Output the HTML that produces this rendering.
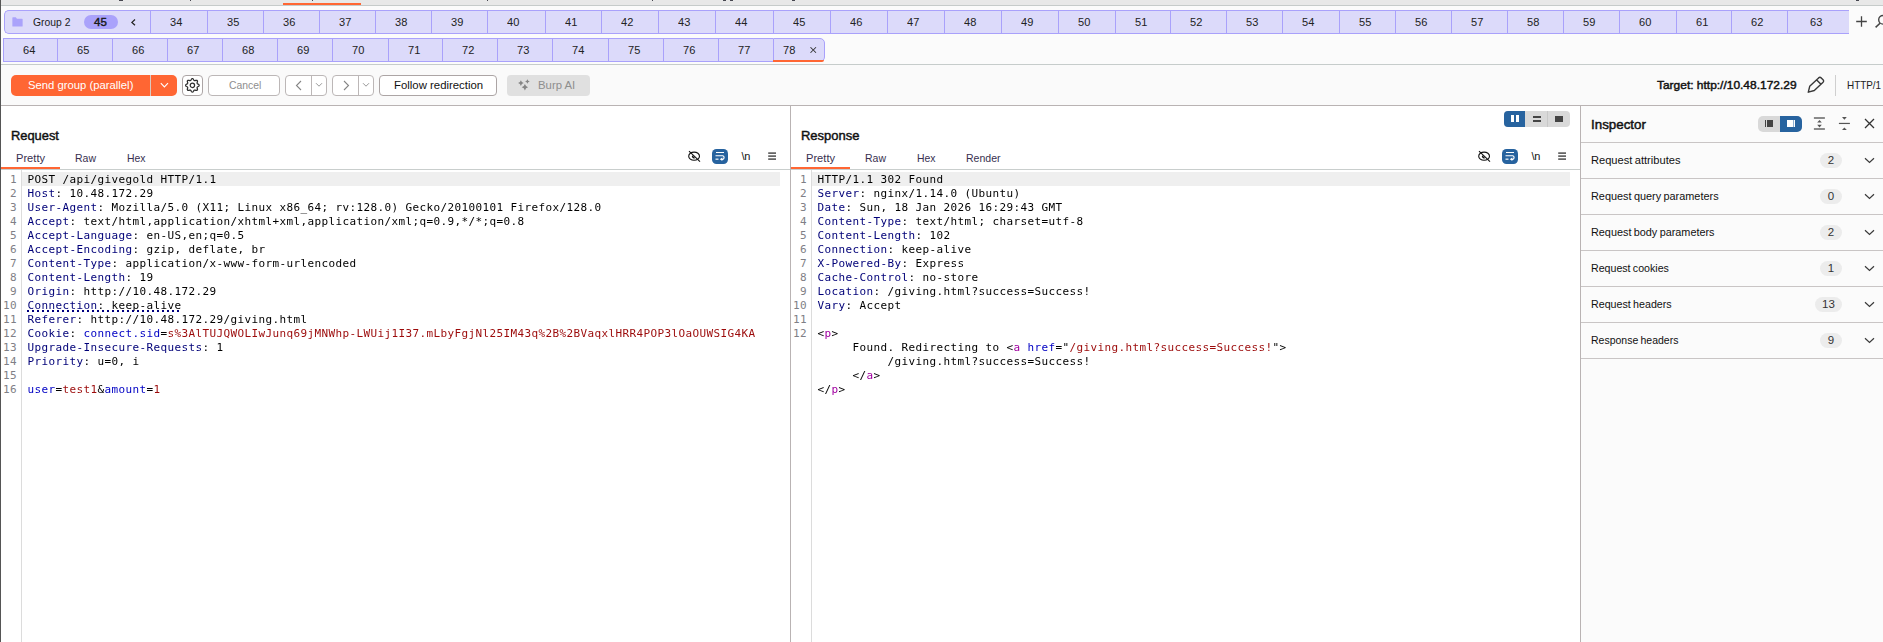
<!DOCTYPE html>
<html><head><meta charset="utf-8"><title>Burp Repeater</title>
<style>
html,body{margin:0;padding:0}
body{width:1883px;height:642px;position:relative;overflow:hidden;background:#fff;font-family:"Liberation Sans","DejaVu Sans",sans-serif;font-size:11.5px;color:#1a1a1a}
.a{position:absolute}
.t{position:absolute;white-space:nowrap;line-height:14px;height:14px}
.tab{position:absolute;box-sizing:border-box;background:#dcdafa;border:1px solid #a9a1fb;border-right:none;height:24px;text-align:left;line-height:22px;font-size:11.5px;color:#222;padding-left:19px}
.btn{position:absolute;box-sizing:border-box;border:1px solid #aca5a5;border-radius:4px;background:#fff;height:21px;top:75px}
.mono{font-family:"DejaVu Sans Mono","Liberation Mono",monospace;font-size:11px;letter-spacing:0.378px;white-space:pre;line-height:14px}
.ln{position:absolute;height:14px;white-space:pre;will-change:transform}
.num{position:absolute;height:14px;text-align:right;color:#7f7f86;width:18px}
.sb{font-weight:normal;-webkit-text-stroke:0.45px currentColor}
.h{color:#000078}
.r{color:#9c0a0a}
.b{color:#0000c4}
.m{color:#a000a0}
.k{color:#000}
.ui{color:#383050}
.row{position:absolute;left:1581px;width:302px;height:36px;border-bottom:1px solid #c9c5c5;box-sizing:border-box}
.badge{position:absolute;height:15px;border-radius:8px;background:#ececec;text-align:center;line-height:15px;font-size:11.5px;color:#333}
.tn{display:inline-block;transform-origin:0 50%;transform:scaleX(0.9615)}
</style></head>
<body>
<div class="a" style="left:0;top:0;width:1883px;height:5px;background:#e8e8e8"></div>
<div class="a" style="left:0;top:5px;width:1883px;height:1px;background:#c6cbca"></div>
<div class="a" style="left:283px;top:3px;width:78px;height:2px;background:#ff6633"></div>
<div class="a" style="left:119px;top:0;width:4px;height:1px;background:#2a2a35;opacity:.85"></div>
<div class="a" style="left:189.5px;top:0;width:1.2px;height:1px;background:#2a2a35;opacity:.85"></div>
<div class="a" style="left:312px;top:0;width:1.2px;height:1px;background:#2a2a35;opacity:.85"></div>
<div class="a" style="left:486.5px;top:0;width:1.2px;height:1px;background:#2a2a35;opacity:.85"></div>
<div class="a" style="left:652px;top:0;width:1.2px;height:1px;background:#2a2a35;opacity:.85"></div>
<div class="a" style="left:723px;top:0;width:3px;height:1px;background:#2a2a35;opacity:.85"></div>
<div class="a" style="left:729.5px;top:0;width:3px;height:1px;background:#2a2a35;opacity:.85"></div>
<div class="a" style="left:791.5px;top:0;width:3px;height:1px;background:#2a2a35;opacity:.85"></div>
<div class="a" style="left:1856px;top:0;width:3px;height:1px;background:#2a2a35;opacity:.85"></div>
<div class="a" style="left:0;top:6px;width:1883px;height:58px;background:#fbfbfb"></div>
<div class="a" style="left:0;top:64px;width:1883px;height:1px;background:#c6cccb"></div>
<div class="a" style="left:0;top:65px;width:1883px;height:40px;background:#fafafa"></div>
<div class="a" style="left:0;top:105px;width:1883px;height:1px;background:#b9b3b3"></div>
<div class="tab" style="left:4px;top:10px;width:146px;border-radius:5px 0 0 5px"></div>
<div class="tab" style="left:150px;top:10px;width:57px"><span class="tn">34</span></div>
<div class="tab" style="left:207px;top:10px;width:56px"><span class="tn">35</span></div>
<div class="tab" style="left:263px;top:10px;width:56px"><span class="tn">36</span></div>
<div class="tab" style="left:319px;top:10px;width:56px"><span class="tn">37</span></div>
<div class="tab" style="left:375px;top:10px;width:56px"><span class="tn">38</span></div>
<div class="tab" style="left:431px;top:10px;width:56px"><span class="tn">39</span></div>
<div class="tab" style="left:487px;top:10px;width:58px"><span class="tn">40</span></div>
<div class="tab" style="left:545px;top:10px;width:56px"><span class="tn">41</span></div>
<div class="tab" style="left:601px;top:10px;width:57px"><span class="tn">42</span></div>
<div class="tab" style="left:658px;top:10px;width:57px"><span class="tn">43</span></div>
<div class="tab" style="left:715px;top:10px;width:58px"><span class="tn">44</span></div>
<div class="tab" style="left:773px;top:10px;width:57px"><span class="tn">45</span></div>
<div class="tab" style="left:830px;top:10px;width:57px"><span class="tn">46</span></div>
<div class="tab" style="left:887px;top:10px;width:57px"><span class="tn">47</span></div>
<div class="tab" style="left:944px;top:10px;width:57px"><span class="tn">48</span></div>
<div class="tab" style="left:1001px;top:10px;width:57px"><span class="tn">49</span></div>
<div class="tab" style="left:1058px;top:10px;width:57px"><span class="tn">50</span></div>
<div class="tab" style="left:1115px;top:10px;width:55px"><span class="tn">51</span></div>
<div class="tab" style="left:1170px;top:10px;width:56px"><span class="tn">52</span></div>
<div class="tab" style="left:1226px;top:10px;width:56px"><span class="tn">53</span></div>
<div class="tab" style="left:1282px;top:10px;width:57px"><span class="tn">54</span></div>
<div class="tab" style="left:1339px;top:10px;width:56px"><span class="tn">55</span></div>
<div class="tab" style="left:1395px;top:10px;width:56px"><span class="tn">56</span></div>
<div class="tab" style="left:1451px;top:10px;width:56px"><span class="tn">57</span></div>
<div class="tab" style="left:1507px;top:10px;width:56px"><span class="tn">58</span></div>
<div class="tab" style="left:1563px;top:10px;width:56px"><span class="tn">59</span></div>
<div class="tab" style="left:1619px;top:10px;width:57px"><span class="tn">60</span></div>
<div class="tab" style="left:1676px;top:10px;width:55px"><span class="tn">61</span></div>
<div class="tab" style="left:1731px;top:10px;width:56px"><span class="tn">62</span></div>
<div class="tab" style="left:1787px;top:10px;width:62px;padding-left:22px"><span class="tn">63</span></div>
<div class="tab" style="left:3px;top:38px;width:54px"><span class="tn">64</span></div>
<div class="tab" style="left:57px;top:38px;width:55px"><span class="tn">65</span></div>
<div class="tab" style="left:112px;top:38px;width:55px"><span class="tn">66</span></div>
<div class="tab" style="left:167px;top:38px;width:55px"><span class="tn">67</span></div>
<div class="tab" style="left:222px;top:38px;width:55px"><span class="tn">68</span></div>
<div class="tab" style="left:277px;top:38px;width:55px"><span class="tn">69</span></div>
<div class="tab" style="left:332px;top:38px;width:56px"><span class="tn">70</span></div>
<div class="tab" style="left:388px;top:38px;width:54px"><span class="tn">71</span></div>
<div class="tab" style="left:442px;top:38px;width:55px"><span class="tn">72</span></div>
<div class="tab" style="left:497px;top:38px;width:55px"><span class="tn">73</span></div>
<div class="tab" style="left:552px;top:38px;width:56px"><span class="tn">74</span></div>
<div class="tab" style="left:608px;top:38px;width:55px"><span class="tn">75</span></div>
<div class="tab" style="left:663px;top:38px;width:55px"><span class="tn">76</span></div>
<div class="tab" style="left:718px;top:38px;width:55px"><span class="tn">77</span></div>
<div class="tab" style="left:773px;top:38px;width:52px;border-right:1px solid #a9a1fb;border-radius:0 5px 5px 0"></div>
<div class="a" style="left:773px;top:60px;width:51px;height:2px;background:#ff6633;border-radius:0 0 5px 0"></div>
<div class="t" id="t78" style="transform-origin:0 50%;transform:scaleX(0.9615);left:783.0px;top:43px">78</div>
<svg class="a" style="left:809px;top:46px" width="9" height="9" viewBox="0 0 9 9"><path d="M1.500 1.250L7 6.750M7 1.250L1.500 6.750" stroke="#333" stroke-width="1.050" fill="none"/></svg>
<svg class="a" style="left:12px;top:17px" width="11" height="10" viewBox="0 0 12 11" preserveAspectRatio="none"><path d="M0.5 0.3h3.6l1.3 1.5h5.6c.4 0 .6.2.6.6v7.4c0 .4-.2.6-.6.6h-10c-.4 0-.6-.2-.6-.6v-8.9c0-.4.2-.6.6-.6z" fill="#aaa2fb"/></svg>
<div class="t" id="tgroup" style="transform-origin:0 50%;transform:scaleX(0.9);left:33.0px;top:15px">Group 2</div>
<div class="a" style="left:84px;top:15px;width:34px;height:14px;border-radius:7px;background:#aaa2fb"></div>
<div class="t sb" id="t45" style="transform-origin:0 50%;transform:scaleX(1.0);left:94.0px;top:15px">45</div>
<svg class="a" style="left:130px;top:18px" width="7" height="9" viewBox="0 0 7 9"><path d="M5 1.500L1.900 4.400L5 7.300" stroke="#222" stroke-width="1.250" fill="none"/></svg>
<svg class="a" style="left:1855px;top:15px" width="13" height="13" viewBox="0 0 13 13"><path d="M6.500 1.200v10.600M1.200 6.500h10.600" stroke="#444" stroke-width="1.300" fill="none"/></svg>
<svg class="a" style="left:1871px;top:12px" width="12" height="18" viewBox="0 0 12 18"><circle cx="12" cy="7.800" r="4.300" stroke="#444" stroke-width="1.400" fill="none"/><path d="M9 11.200L4.600 15.400" stroke="#444" stroke-width="1.500"/></svg>
<div class="a" style="left:11px;top:75px;width:166px;height:21px;border-radius:5px;background:#ff6633"></div>
<div class="a" style="left:150px;top:75px;width:1px;height:21px;background:#d9c8c0"></div>
<div class="t" id="tsend" style="transform-origin:0 50%;transform:scaleX(0.9813);left:28.0px;top:78px;color:#fff">Send group (parallel)</div>
<svg class="a" style="left:160px;top:82px" width="9" height="7" viewBox="0 0 9 7"><path d="M0.8 1.2L4.4 4.9L8 1.2" stroke="#fff" stroke-width="1.1" fill="none"/></svg>
<div class="btn" style="left:182px;width:21px"></div>
<div class="btn" style="left:208px;width:72px;border-color:#bcb7b7"></div>
<div class="t" id="tcancel" style="transform-origin:0 50%;transform:scaleX(0.9028);left:228.95px;top:78px;color:#8e8e8e">Cancel</div>
<div class="btn" style="left:285px;width:42px;border-color:#bcb7b7"></div><div class="a" style="left:311px;top:76px;width:1px;height:19px;background:#bcb7b7"></div>
<div class="btn" style="left:332px;width:42px;border-color:#bcb7b7"></div><div class="a" style="left:358px;top:76px;width:1px;height:19px;background:#bcb7b7"></div>
<svg class="a" style="left:295px;top:80px" width="8" height="11" viewBox="0 0 8 11"><path d="M6 1L1.5 5.5L6 10" stroke="#858585" stroke-width="1.1" fill="none"/></svg>
<svg class="a" style="left:342px;top:80px" width="8" height="11" viewBox="0 0 8 11"><path d="M2 1L6.5 5.5L2 10" stroke="#858585" stroke-width="1.1" fill="none"/></svg>
<svg class="a" style="left:315px;top:82px" width="8" height="6" viewBox="0 0 8 6"><path d="M1 1.2L4 4.2L7 1.2" stroke="#999" stroke-width="1" fill="none"/></svg>
<svg class="a" style="left:362px;top:82px" width="8" height="6" viewBox="0 0 8 6"><path d="M1 1.2L4 4.2L7 1.2" stroke="#999" stroke-width="1" fill="none"/></svg>
<div class="btn" style="left:379px;width:118px"></div>
<div class="t" id="tfollow" style="transform-origin:0 50%;transform:scaleX(0.9888);left:394.01px;top:78px;color:#111">Follow redirection</div>
<div class="a" style="left:507px;top:75px;width:83px;height:21px;border-radius:4px;background:#e0e0e0"></div>
<div class="t" id="tburp" style="transform-origin:0 50%;transform:scaleX(0.9865);left:538.01px;top:78px;color:#8e8e8e">Burp AI</div>
<svg class="a" style="left:515px;top:76px" width="16" height="16" viewBox="0 0 16 16"><path d="M5.90 4.30L6.89 6.11L8.70 7.10L6.89 8.09L5.90 9.90L4.91 8.09L3.10 7.10L4.91 6.11ZM12.40 3.20L13.21 4.69L14.70 5.50L13.21 6.31L12.40 7.80L11.59 6.31L10.10 5.50L11.59 4.69ZM9.90 8.00L11.03 10.07L13.10 11.20L11.03 12.33L9.90 14.40L8.77 12.33L6.70 11.20L8.77 10.07Z" fill="#858585"/></svg>
<svg class="a" style="left:182px;top:75px" width="21" height="21" viewBox="0 0 21 21"><path d="M17.15 10.35L17.06 10.79L16.79 11.19L16.24 11.51L15.67 11.76L15.35 12.03L15.16 12.32L15.09 12.66L15.13 13.08L15.35 13.66L15.51 14.27L15.42 14.75L15.17 15.12L14.80 15.37L14.32 15.46L13.71 15.30L13.13 15.08L12.71 15.04L12.37 15.11L12.08 15.30L11.81 15.62L11.56 16.19L11.24 16.74L10.84 17.01L10.40 17.10L9.96 17.01L9.56 16.74L9.24 16.19L8.99 15.62L8.72 15.30L8.43 15.11L8.09 15.04L7.67 15.08L7.09 15.30L6.48 15.46L6.00 15.37L5.63 15.12L5.38 14.75L5.29 14.27L5.45 13.66L5.67 13.08L5.71 12.66L5.64 12.32L5.45 12.03L5.13 11.76L4.56 11.51L4.01 11.19L3.74 10.79L3.65 10.35L3.74 9.91L4.01 9.51L4.56 9.19L5.13 8.94L5.45 8.67L5.64 8.38L5.71 8.04L5.67 7.62L5.45 7.04L5.29 6.43L5.38 5.95L5.63 5.58L6.00 5.33L6.48 5.24L7.09 5.40L7.67 5.62L8.09 5.66L8.43 5.59L8.72 5.40L8.99 5.08L9.24 4.51L9.56 3.96L9.96 3.69L10.40 3.60L10.84 3.69L11.24 3.96L11.56 4.51L11.81 5.08L12.08 5.40L12.37 5.59L12.71 5.66L13.13 5.62L13.71 5.40L14.32 5.24L14.80 5.33L15.17 5.58L15.42 5.95L15.51 6.43L15.35 7.04L15.13 7.62L15.09 8.04L15.16 8.38L15.35 8.67L15.67 8.94L16.24 9.19L16.79 9.51L17.06 9.91Z" fill="none" stroke="#2e2e2e" stroke-width="1.25" stroke-linejoin="round"/><circle cx="10.4" cy="10.35" r="2.2" fill="none" stroke="#2e2e2e" stroke-width="1.2"/></svg>
<div id="ttarget" class="t sb" style="transform-origin:0 50%;transform:scaleX(1.0393);left:1657.2px;top:78px;color:#111">Target: http://10.48.172.29</div>
<svg class="a" style="left:1800px;top:70px" width="30" height="30" viewBox="0 0 30 30"><path d="M8.300 22.200L9.700 16.300L18.600 7.900Q19.900 6.800 21.200 7.900L23.100 9.800Q24.300 11.100 23.100 12.300L14.300 20.500Z M16.700 9.900L20.700 13.900" stroke="#383838" stroke-width="1.400" fill="none" stroke-linejoin="round"/></svg>
<div class="a" style="left:1835px;top:75px;width:1px;height:21px;background:#cfcfcf"></div>
<div class="t" id="thttp" style="transform-origin:0 50%;transform:scaleX(0.86);left:1846.6px;top:78px;color:#222">HTTP/1</div>
<div class="a" style="left:790px;top:105px;width:1px;height:537px;background:#b9b3b3"></div>
<div class="a" style="left:1580px;top:105px;width:1px;height:537px;background:#b9b3b3"></div>
<div class="a" style="left:1581px;top:106px;width:302px;height:536px;background:#fbfbfb"></div>
<div class="t sb" id="rqtitle" style="transform-origin:0 50%;transform:scaleX(0.9898);left:11.01px;top:129px;font-size:13px;color:#111">Request</div>
<div class="t ui" id="rqtab0" style="transform-origin:0 50%;transform:scaleX(0.9667);left:16.0px;top:151px">Pretty</div>
<div class="t ui" id="rqtab1" style="transform-origin:0 50%;transform:scaleX(0.913);left:75.04px;top:151px">Raw</div>
<div class="t ui" id="rqtab2" style="transform-origin:0 50%;transform:scaleX(0.9048);left:127.0px;top:151px">Hex</div>
<div class="a" style="left:1px;top:169px;width:789px;height:1px;background:#c9cecd"></div>
<div class="a" style="left:1px;top:167px;width:59px;height:2px;background:#ff6633"></div>
<div class="a" style="left:21px;top:170px;width:1px;height:472px;background:#dcdcdc"></div>
<div class="a" style="left:22px;top:172px;width:758px;height:14px;background:#efefef"></div>
<div class="t sb" id="rstitle" style="transform-origin:0 50%;transform:scaleX(0.9983);left:801.0px;top:129px;font-size:13px;color:#111">Response</div>
<div class="t ui" id="rstab0" style="transform-origin:0 50%;transform:scaleX(0.9667);left:806.0px;top:151px">Pretty</div>
<div class="t ui" id="rstab1" style="transform-origin:0 50%;transform:scaleX(0.913);left:865.04px;top:151px">Raw</div>
<div class="t ui" id="rstab2" style="transform-origin:0 50%;transform:scaleX(0.9048);left:917.0px;top:151px">Hex</div>
<div class="t ui" id="rstab3" style="transform-origin:0 50%;transform:scaleX(0.9158);left:966.2px;top:151px">Render</div>
<div class="a" style="left:791px;top:169px;width:789px;height:1px;background:#c9cecd"></div>
<div class="a" style="left:791px;top:167px;width:59px;height:2px;background:#ff6633"></div>
<div class="a" style="left:811px;top:170px;width:1px;height:472px;background:#dcdcdc"></div>
<div class="a" style="left:812px;top:172px;width:758px;height:14px;background:#efefef"></div>
<div class="num mono" style="left:-1px;top:173px">1</div>
<div class="ln mono" style="left:27px;padding-left:0.5px;top:173px"><span class="k">POST /api/givegold HTTP/1.1</span></div>
<div class="num mono" style="left:-1px;top:187px">2</div>
<div class="ln mono" style="left:27px;padding-left:0.5px;top:187px"><span class="h">Host</span><span class="k">: 10.48.172.29</span></div>
<div class="num mono" style="left:-1px;top:201px">3</div>
<div class="ln mono" style="left:27px;padding-left:0.5px;top:201px"><span class="h">User-Agent</span><span class="k">: Mozilla/5.0 (X11; Linux x86_64; rv:128.0) Gecko/20100101 Firefox/128.0</span></div>
<div class="num mono" style="left:-1px;top:215px">4</div>
<div class="ln mono" style="left:27px;padding-left:0.5px;top:215px"><span class="h">Accept</span><span class="k">: text/html,application/xhtml+xml,application/xml;q=0.9,*/*;q=0.8</span></div>
<div class="num mono" style="left:-1px;top:229px">5</div>
<div class="ln mono" style="left:27px;padding-left:0.5px;top:229px"><span class="h">Accept-Language</span><span class="k">: en-US,en;q=0.5</span></div>
<div class="num mono" style="left:-1px;top:243px">6</div>
<div class="ln mono" style="left:27px;padding-left:0.5px;top:243px"><span class="h">Accept-Encoding</span><span class="k">: gzip, deflate, br</span></div>
<div class="num mono" style="left:-1px;top:257px">7</div>
<div class="ln mono" style="left:27px;padding-left:0.5px;top:257px"><span class="h">Content-Type</span><span class="k">: application/x-www-form-urlencoded</span></div>
<div class="num mono" style="left:-1px;top:271px">8</div>
<div class="ln mono" style="left:27px;padding-left:0.5px;top:271px"><span class="h">Content-Length</span><span class="k">: 19</span></div>
<div class="num mono" style="left:-1px;top:285px">9</div>
<div class="ln mono" style="left:27px;padding-left:0.5px;top:285px"><span class="h">Origin</span><span class="k">: http://10.48.172.29</span></div>
<div class="num mono" style="left:-1px;top:299px">10</div>
<div class="ln mono" style="left:27px;padding-left:0.5px;top:299px"><span class="h">Connection</span><span class="k">: keep-alive</span></div>
<div class="num mono" style="left:-1px;top:313px">11</div>
<div class="ln mono" style="left:27px;padding-left:0.5px;top:313px"><span class="h">Referer</span><span class="k">: http://10.48.172.29/giving.html</span></div>
<div class="num mono" style="left:-1px;top:327px">12</div>
<div class="ln mono" style="left:27px;padding-left:0.5px;top:327px"><span class="h">Cookie</span><span class="k">: </span><span class="b">connect.sid</span><span class="k">=</span><span class="r">s%3AlTUJQWOLIwJunq69jMNWhp-LWUij1I37.mLbyFgjNl25IM43q%2B%2BVaqxlHRR4POP3lOaOUWSIG4KA</span></div>
<div class="num mono" style="left:-1px;top:341px">13</div>
<div class="ln mono" style="left:27px;padding-left:0.5px;top:341px"><span class="h">Upgrade-Insecure-Requests</span><span class="k">: 1</span></div>
<div class="num mono" style="left:-1px;top:355px">14</div>
<div class="ln mono" style="left:27px;padding-left:0.5px;top:355px"><span class="h">Priority</span><span class="k">: u=0, i</span></div>
<div class="num mono" style="left:-1px;top:369px">15</div>
<div class="num mono" style="left:-1px;top:383px">16</div>
<div class="ln mono" style="left:27px;padding-left:0.5px;top:383px"><span class="b">user</span><span class="k">=</span><span class="r">test1</span><span class="k">&amp;</span><span class="b">amount</span><span class="k">=</span><span class="r">1</span></div>
<div class="num mono" style="left:789px;top:173px">1</div>
<div class="ln mono" style="left:817px;padding-left:0.5px;top:173px"><span class="k">HTTP/1.1 302 Found</span></div>
<div class="num mono" style="left:789px;top:187px">2</div>
<div class="ln mono" style="left:817px;padding-left:0.5px;top:187px"><span class="h">Server</span><span class="k">: nginx/1.14.0 (Ubuntu)</span></div>
<div class="num mono" style="left:789px;top:201px">3</div>
<div class="ln mono" style="left:817px;padding-left:0.5px;top:201px"><span class="h">Date</span><span class="k">: Sun, 18 Jan 2026 16:29:43 GMT</span></div>
<div class="num mono" style="left:789px;top:215px">4</div>
<div class="ln mono" style="left:817px;padding-left:0.5px;top:215px"><span class="h">Content-Type</span><span class="k">: text/html; charset=utf-8</span></div>
<div class="num mono" style="left:789px;top:229px">5</div>
<div class="ln mono" style="left:817px;padding-left:0.5px;top:229px"><span class="h">Content-Length</span><span class="k">: 102</span></div>
<div class="num mono" style="left:789px;top:243px">6</div>
<div class="ln mono" style="left:817px;padding-left:0.5px;top:243px"><span class="h">Connection</span><span class="k">: keep-alive</span></div>
<div class="num mono" style="left:789px;top:257px">7</div>
<div class="ln mono" style="left:817px;padding-left:0.5px;top:257px"><span class="h">X-Powered-By</span><span class="k">: Express</span></div>
<div class="num mono" style="left:789px;top:271px">8</div>
<div class="ln mono" style="left:817px;padding-left:0.5px;top:271px"><span class="h">Cache-Control</span><span class="k">: no-store</span></div>
<div class="num mono" style="left:789px;top:285px">9</div>
<div class="ln mono" style="left:817px;padding-left:0.5px;top:285px"><span class="h">Location</span><span class="k">: /giving.html?success=Success!</span></div>
<div class="num mono" style="left:789px;top:299px">10</div>
<div class="ln mono" style="left:817px;padding-left:0.5px;top:299px"><span class="h">Vary</span><span class="k">: Accept</span></div>
<div class="num mono" style="left:789px;top:313px">11</div>
<div class="num mono" style="left:789px;top:327px">12</div>
<div class="ln mono" style="left:817px;padding-left:0.5px;top:327px"><span class="k">&lt;</span><span class="m">p</span><span class="k">&gt;</span></div>
<div class="ln mono" style="left:817px;padding-left:0.5px;top:341px"><span class="k">     Found. Redirecting to &lt;</span><span class="m">a</span><span class="k"> </span><span class="b">href</span><span class="k">="</span><span class="r">/giving.html?success=Success!</span><span class="k">"&gt;</span></div>
<div class="ln mono" style="left:817px;padding-left:0.5px;top:355px"><span class="k">          /giving.html?success=Success!</span></div>
<div class="ln mono" style="left:817px;padding-left:0.5px;top:369px"><span class="k">     &lt;/</span><span class="m">a</span><span class="k">&gt;</span></div>
<div class="ln mono" style="left:817px;padding-left:0.5px;top:383px"><span class="k">&lt;/</span><span class="m">p</span><span class="k">&gt;</span></div>
<div class="a" style="left:27px;top:310px;width:154px;height:2px;background:repeating-linear-gradient(90deg,#000080 0,#000080 2px,transparent 2px,transparent 5px)"></div>
<svg class="a" style="left:687px;top:150px" width="15" height="13" viewBox="0 0 15 13"><ellipse cx="7.1" cy="6.2" rx="5.4" ry="4.1" fill="none" stroke="#111" stroke-width="1.1"/><path d="M5.2 5.2a2 2 0 0 0 2.9 2.700z" fill="#111"/><path d="M2 1.200L13 11.6" stroke="#111" stroke-width="1.1"/></svg>
<div class="a" style="left:712px;top:149px;width:16px;height:15px;border-radius:4.500px;background:#27639f"></div>
<svg class="a" style="left:712px;top:149px" width="16" height="15" viewBox="0 0 16 15"><path d="M4 3.500h8" stroke="#fff" stroke-width="1" fill="none"/><path d="M3.5 6.800h7.300a1.9 1.9 0 0 1 0 3.600H9.5" stroke="#fff" stroke-width="1.1" fill="none"/><path d="M3.5 10.200h3" stroke="#fff" stroke-width="1.4" fill="none" opacity="0.850"/><path d="M10.3 8.400L7.8 10.300l2.5 1.800z" fill="#fff"/></svg>
<div class="t" style="left:741.6px;top:149px;font-size:11px;color:#111;letter-spacing:-0.300px">\n</div>
<svg class="a" style="left:768px;top:152px" width="8" height="9" viewBox="0 0 8 9"><path d="M0.2 1.100h7.800M0.2 4.100h7.800M0.2 7.150h7.8" stroke="#666" stroke-width="1.7"/></svg>
<svg class="a" style="left:1477px;top:150px" width="15" height="13" viewBox="0 0 15 13"><ellipse cx="7.1" cy="6.2" rx="5.4" ry="4.1" fill="none" stroke="#111" stroke-width="1.1"/><path d="M5.2 5.2a2 2 0 0 0 2.9 2.700z" fill="#111"/><path d="M2 1.200L13 11.6" stroke="#111" stroke-width="1.1"/></svg>
<div class="a" style="left:1502px;top:149px;width:16px;height:15px;border-radius:4.500px;background:#27639f"></div>
<svg class="a" style="left:1502px;top:149px" width="16" height="15" viewBox="0 0 16 15"><path d="M4 3.500h8" stroke="#fff" stroke-width="1" fill="none"/><path d="M3.5 6.800h7.300a1.9 1.9 0 0 1 0 3.600H9.5" stroke="#fff" stroke-width="1.1" fill="none"/><path d="M3.5 10.200h3" stroke="#fff" stroke-width="1.4" fill="none" opacity="0.850"/><path d="M10.3 8.400L7.8 10.300l2.5 1.800z" fill="#fff"/></svg>
<div class="t" style="left:1531.6px;top:149px;font-size:11px;color:#111;letter-spacing:-0.300px">\n</div>
<svg class="a" style="left:1558px;top:152px" width="8" height="9" viewBox="0 0 8 9"><path d="M0.2 1.100h7.800M0.2 4.100h7.800M0.2 7.150h7.8" stroke="#666" stroke-width="1.7"/></svg>
<div class="a" style="left:1504px;top:111px;width:66px;height:16px;border-radius:4px;background:#d9d9d9"></div>
<div class="a" style="left:1504px;top:111px;width:21px;height:16px;border-radius:4px 0 0 4px;background:#27639f"></div>
<div class="a" style="left:1547px;top:111px;width:1px;height:16px;background:#c8c8c8"></div>
<div class="a" style="left:1511px;top:115px;width:3px;height:7px;background:#fff"></div><div class="a" style="left:1516px;top:115px;width:3px;height:7px;background:#fff"></div>
<div class="a" style="left:1533px;top:116px;width:8px;height:2px;background:#444"></div><div class="a" style="left:1533px;top:120px;width:8px;height:2px;background:#444"></div>
<div class="a" style="left:1555px;top:116px;width:8px;height:6px;background:#444"></div>
<div class="t sb" id="tinsp" style="transform-origin:0 50%;transform:scaleX(1.0278);left:1590.99px;top:118px;font-size:13px;color:#111">Inspector</div>
<div class="a" style="left:1758px;top:116px;width:44px;height:16px;border-radius:5px;background:#d9d9d9"></div>
<div class="a" style="left:1780px;top:116px;width:22px;height:16px;border-radius:0 5px 5px 0;background:#27639f"></div>
<div class="a" style="left:1765px;top:120.3px;width:8px;height:6.5px;background:#444"></div><div class="a" style="left:1766.2px;top:120.3px;width:0.6px;height:6.5px;background:#d9d9d9"></div>
<div class="a" style="left:1787px;top:120.3px;width:8px;height:6.5px;background:#fff"></div><div class="a" style="left:1792.5px;top:120.3px;width:1px;height:6.5px;background:#8fb0d2"></div>
<svg class="a" style="left:1813px;top:116px" width="13" height="15" viewBox="0 0 13 15"><path d="M0.900 2h11M0.900 13h11" stroke="#666" stroke-width="1.600"/><path d="M6.500 3.900l2.300 2.700h-4.600zM6.500 11.400l2.300-2.700h-4.600z" fill="#555"/></svg>
<svg class="a" style="left:1838px;top:116px" width="13" height="15" viewBox="0 0 13 15"><path d="M0.900 7.450h11" stroke="#555" stroke-width="1.200"/><path d="M6.400 3.700l2.400-2.600h-4.800zM6.400 11.400l2.400 2.700h-4.800z" fill="#555"/></svg>
<svg class="a" style="left:1864px;top:118px" width="11" height="11" viewBox="0 0 11 11"><path d="M1 1l9 9M10 1l-9 9" stroke="#333" stroke-width="1.300"/></svg>
<div class="a" style="left:1581px;top:142px;width:302px;height:1px;background:#c9c5c5"></div>
<div class="a" style="left:1581px;top:178px;width:302px;height:1px;background:#c9c5c5"></div>
<div class="t" id="ti0" style="transform-origin:0 50%;transform:scaleX(0.9656);left:1591.2px;top:153px;color:#111;word-spacing:-0.7px">Request attributes</div>
<div class="badge" style="left:1820px;top:153px;width:22px">2</div>
<svg class="a" style="left:1864px;top:157px" width="11" height="7" viewBox="0 0 11 7"><path d="M1 1.200l4.500 4.200L10 1.200" stroke="#3a3a3a" stroke-width="1.200" fill="none"/></svg>
<div class="a" style="left:1581px;top:214px;width:302px;height:1px;background:#c9c5c5"></div>
<div class="t" id="ti1" style="transform-origin:0 50%;transform:scaleX(0.9467);left:1591.2px;top:189px;color:#111;word-spacing:-0.7px">Request query parameters</div>
<div class="badge" style="left:1820px;top:189px;width:22px">0</div>
<svg class="a" style="left:1864px;top:193px" width="11" height="7" viewBox="0 0 11 7"><path d="M1 1.200l4.500 4.200L10 1.200" stroke="#3a3a3a" stroke-width="1.200" fill="none"/></svg>
<div class="a" style="left:1581px;top:250px;width:302px;height:1px;background:#c9c5c5"></div>
<div class="t" id="ti2" style="transform-origin:0 50%;transform:scaleX(0.9435);left:1591.2px;top:225px;color:#111;word-spacing:-0.7px">Request body parameters</div>
<div class="badge" style="left:1820px;top:225px;width:22px">2</div>
<svg class="a" style="left:1864px;top:229px" width="11" height="7" viewBox="0 0 11 7"><path d="M1 1.200l4.500 4.200L10 1.200" stroke="#3a3a3a" stroke-width="1.200" fill="none"/></svg>
<div class="a" style="left:1581px;top:286px;width:302px;height:1px;background:#c9c5c5"></div>
<div class="t" id="ti3" style="transform-origin:0 50%;transform:scaleX(0.9238);left:1591.2px;top:261px;color:#111;word-spacing:-0.7px">Request cookies</div>
<div class="badge" style="left:1820px;top:261px;width:22px">1</div>
<svg class="a" style="left:1864px;top:265px" width="11" height="7" viewBox="0 0 11 7"><path d="M1 1.200l4.500 4.200L10 1.200" stroke="#3a3a3a" stroke-width="1.200" fill="none"/></svg>
<div class="a" style="left:1581px;top:322px;width:302px;height:1px;background:#c9c5c5"></div>
<div class="t" id="ti4" style="transform-origin:0 50%;transform:scaleX(0.9287);left:1591.2px;top:297px;color:#111;word-spacing:-0.7px">Request headers</div>
<div class="badge" style="left:1815px;top:297px;width:27px">13</div>
<svg class="a" style="left:1864px;top:301px" width="11" height="7" viewBox="0 0 11 7"><path d="M1 1.200l4.500 4.200L10 1.200" stroke="#3a3a3a" stroke-width="1.200" fill="none"/></svg>
<div class="a" style="left:1581px;top:358px;width:302px;height:1px;background:#c9c5c5"></div>
<div class="t" id="ti5" style="transform-origin:0 50%;transform:scaleX(0.9125);left:1591.2px;top:333px;color:#111;word-spacing:-0.7px">Response headers</div>
<div class="badge" style="left:1820px;top:333px;width:22px">9</div>
<svg class="a" style="left:1864px;top:337px" width="11" height="7" viewBox="0 0 11 7"><path d="M1 1.200l4.500 4.200L10 1.200" stroke="#3a3a3a" stroke-width="1.200" fill="none"/></svg>
<div class="a" style="left:0;top:0;width:1px;height:642px;background:#555"></div>
</body></html>
